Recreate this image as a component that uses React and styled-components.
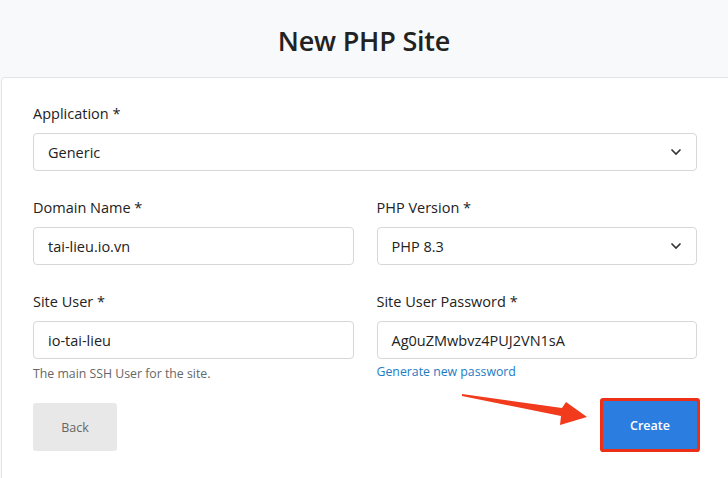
import styled, { createGlobalStyle } from "styled-components";

const GlobalStyle = createGlobalStyle`
    html, body {
        margin: 0;
        padding: 0;
        background: #ffffff;
        overflow: hidden;
    }
    body {
        font-family: "Open Sans", "Noto Sans", Arial, sans-serif;
        color: #222;
    }
`;

const Page = styled.div`
    position: relative;
    width: 728px;
    height: 478px;
    background: #f8f9fb;
    overflow: hidden;
`;

const Header = styled.div`
    height: 77px;
    display: flex;
    align-items: center;
    justify-content: center;
`;

const Title = styled.h1`
    margin: 0;
    padding-top: 4px;
    font-size: 27px;
    font-weight: 600;
    letter-spacing: -0.2px;
    color: #222;
`;

const Card = styled.div`
    margin-left: 1px;
    margin-right: -5px;
    height: 420px;
    background: #fff;
    border: 1px solid #e2e4e7;
    border-radius: 4px 0 0 0;
    padding: 25px 35px 0 31px;
    display: flex;
    flex-direction: column;
    gap: 26px;
`;

const Row = styled.div`
    display: grid;
    grid-template-columns: ${props => props.cols || "1fr"};
    column-gap: 23px;
`;

const Field = styled.div`
    display: flex;
    flex-direction: column;
`;

const Label = styled.label`
    font-size: 14.5px;
    line-height: 22px;
    color: #222;
    margin-bottom: 8px;
`;

const Box = styled.div`
    position: relative;
    height: 38px;
    box-sizing: border-box;
    border: 1px solid #d5d7da;
    border-radius: 4px;
    background: #fff;
    display: flex;
    align-items: center;
    padding: 0 14px;
    font-size: 14.5px;
    color: #222;
`;

const Chevron = styled.svg`
    margin-left: auto;
    width: 12px;
    height: 8px;
`;

const Help = styled.div`
    margin-top: ${props => props.top || 6}px;
    font-size: ${props => props.link ? 12.3 : 12.3}px;
    line-height: 18px;
    color: ${props => props.link ? "#1c7cc4" : "#666"};
`;

const Actions = styled.div`
    display: flex;
    justify-content: space-between;
    align-items: flex-start;
    margin-top: -8px;
`;

const Button = styled.button`
    height: 48px;
    border: none;
    border-radius: ${props => props.primary ? 1 : 3}px;
    font-family: inherit;
    font-size: 12.5px;
    font-weight: ${props => props.primary ? 600 : 400};
    padding: 0;
    width: ${props => props.primary ? 94 : 84}px;
    margin-top: ${props => props.primary ? 0 : 2}px;
    background: ${props => props.primary ? "#2b7de0" : "#e8e8e8"};
    color: ${props => props.primary ? "#fff" : "#666"};
    box-shadow: ${props => props.primary ? "0 0 0 3px #ec2f17" : "none"};
`;

const Arrow = styled.svg`
    position: absolute;
    left: 0;
    top: 0;
    pointer-events: none;
`;

const Select = ({ value }) => (
    <Box>
        {value}
        <Chevron viewBox="0 0 12 8">
            <polyline points="1.5,1.5 6,6 10.5,1.5" fill="none" stroke="#333" strokeWidth="1.6" />
        </Chevron>
    </Box>
);

const App = () => {
    return (
        <Page>
            <GlobalStyle />
            <Header>
                <Title>New PHP Site</Title>
            </Header>
            <Card>
                <Field>
                    <Label>Application *</Label>
                    <Select value="Generic" />
                </Field>
                <Row cols="1fr 1fr">
                    <Field>
                        <Label>Domain Name *</Label>
                        <Box>tai-lieu.io.vn</Box>
                    </Field>
                    <Field>
                        <Label>PHP Version *</Label>
                        <Select value="PHP 8.3" />
                    </Field>
                </Row>
                <Row cols="1fr 1fr">
                    <Field>
                        <Label>Site User *</Label>
                        <Box>io-tai-lieu</Box>
                        <Help>The main SSH User for the site.</Help>
                    </Field>
                    <Field>
                        <Label>Site User Password *</Label>
                        <Box>Ag0uZMwbvz4PUJ2VN1sA</Box>
                        <Help link top={4}>Generate new password</Help>
                    </Field>
                </Row>
                <Actions>
                    <Button>Back</Button>
                    <Button primary>Create</Button>
                </Actions>
            </Card>
            <Arrow width="728" height="478">
                <polygon
                    points="462,394 562,408 566,402 587,417 560,425 561,416 462,396"
                    fill="#f23a1c"
                />
            </Arrow>
        </Page>
    );
};

export default App;
